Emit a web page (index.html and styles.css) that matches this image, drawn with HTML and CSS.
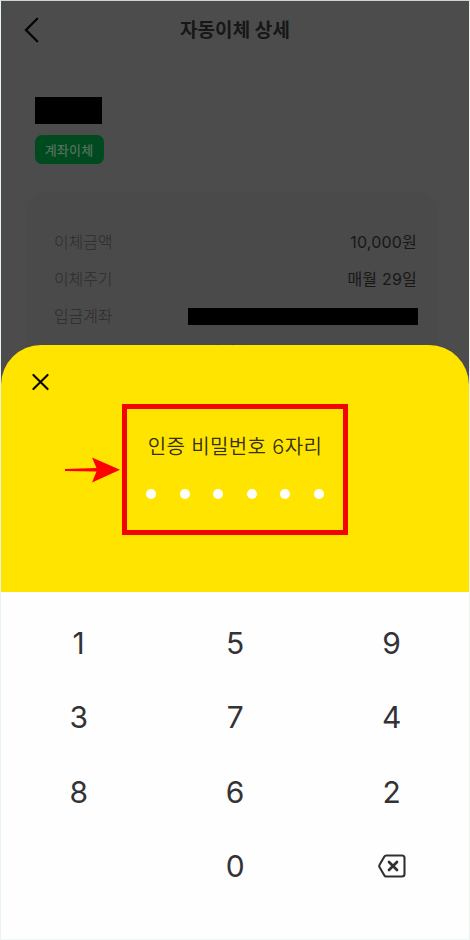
FILE: index.html
```html
<!DOCTYPE html>
<html lang="ko">
<head>
<meta charset="utf-8">
<title>자동이체 상세</title>
<link rel="stylesheet" href="styles.css">
</head>
<body>
<div class="screen">
  <main class="detail">
    <header class="topbar">
      <svg class="back" viewBox="0 0 16 26" fill="none"><path d="M13.2 1.8 2 13l11.2 11.2" stroke="#050505" stroke-width="2.3" stroke-linecap="round"/></svg>
      <h1 class="title">자동이체 상세</h1>
    </header>
    <div class="name-mask"></div>
    <span class="badge">계좌이체</span>
    <section class="card">
      <div class="row"><span class="label">이체금액</span><span class="value">10,000원</span></div>
      <div class="row"><span class="label">이체주기</span><span class="value">매월 29일</span></div>
      <div class="row"><span class="label">입금계좌</span><span class="account-mask"></span></div>
      <div class="row owner">서배인</div>
    </section>
  </main>
  <section class="sheet">
    <div class="prompt">
      <svg class="close" viewBox="0 0 18 18" fill="none"><path d="M1.5 1.5l15 15M16.5 1.5l-15 15" stroke="#080800" stroke-width="2.2" stroke-linecap="round"/></svg>
      <div class="focus">
        <p class="caption">인증 비밀번호 6자리</p>
        <div class="dots"><i></i><i></i><i></i><i></i><i></i><i></i></div>
      </div>
      <svg class="arrow" viewBox="0 0 56 26"><path d="M0 12.1 31.5 11 27 .5 55 12.8 27 25.5 31.5 14.5 0 14z" fill="#f00"/></svg>
    </div>
    <div class="keypad">
      <span>1</span><span>5</span><span>9</span>
      <span>3</span><span>7</span><span>4</span>
      <span>8</span><span>6</span><span>2</span>
      <span></span><span>0</span>
      <span><svg class="delete" viewBox="0 0 28 24" fill="none" stroke="#303032" stroke-linejoin="round" stroke-linecap="round"><path d="M8.2 1.5H24a2.5 2.5 0 0 1 2.5 2.5v16a2.5 2.5 0 0 1-2.5 2.5H8.2a2 2 0 0 1-1.8-1L1.6 13.2a2.2 2.2 0 0 1 0-2.4L6.4 2.5a2 2 0 0 1 1.8-1z" stroke-width="2.1"/><path d="m11 8 8 8M19 8l-8 8" stroke-width="2.7"/></svg></span>
    </div>
  </section>
</div>
</body>
</html>
```
FILE: styles.css
```css
* { box-sizing: border-box; }
body { margin: 0; background: #fff; font-family: Inter, "Noto Sans CJK KR", sans-serif; }
.screen {
  display: flex; flex-direction: column;
  width: 470px; height: 940px; overflow: hidden;
  border: 1px solid #dce7e3; border-color: #ccd6d1 #eaf4ef #eefaf6;
  background: #fefefe;
}
.detail { height: 387px; flex: none; background: #4c4c4c; overflow: hidden; }
.topbar { position: relative; height: 95px; padding-top: 15px; }
.back { position: absolute; left: 23px; top: 16px; width: 16px; height: 26px; }
.title { margin: 0; text-align: center; font-size: 19px; line-height: 30px; font-weight: 700; color: #171717; letter-spacing: .1px; }
.name-mask { width: 67px; height: 27px; margin-left: 34px; margin-top: 1px; background: #000; }
.badge {
  display: flex; align-items: center; justify-content: center;
  width: 69px; height: 29px; margin: 11px 0 0 34px;
  border-radius: 7px; background: #004a20; color: #52705c;
  font-size: 13px; font-weight: 500; letter-spacing: .2px; padding: 0 1px 1px 0;
}
.card { margin: 28px 31px 0 24px; padding: 30px 20px 0 29px; height: 200px; border-radius: 22px; background: #4a4a4a; }
.row { display: flex; justify-content: space-between; align-items: center; height: 37.3px; font-size: 16px; }
.label { color: #2c2c2c; font-weight: 300; letter-spacing: -.1px; }
.value { padding-right: 1px; color: #171717; font-weight: 400; letter-spacing: .2px; }
.account-mask { width: 230px; height: 17px; background: #000; margin-top: 2px; }
.owner { color: #1a1a1a; padding-left: 152px; height: 35px; font-weight: 300; letter-spacing: -.4px; }
.sheet { position: relative; margin-top: -43px; display: flex; flex-direction: column; flex: 1; }
.prompt { position: relative; height: 247px; flex: none; padding-top: 59px; border-radius: 40px 40px 0 0; background: #ffe400; }
.close { position: absolute; left: 31px; top: 28px; width: 17px; height: 18px; }
.focus { width: 226px; height: 131px; margin-left: 121px; border: 5px solid #f20500; padding-top: 23px; }
.caption { margin: 0; text-align: center; font-size: 20px; line-height: 30px; font-weight: 350; color: #343011; letter-spacing: .35px; white-space: nowrap; }
.dots { display: flex; justify-content: space-between; width: 178px; margin: 27px 0 0 19px; }
.dots i { width: 10px; height: 10px; border-radius: 50%; background: #fff; }
.arrow { position: absolute; left: 64px; top: 112px; width: 56px; height: 26px; }
.keypad { display: grid; grid-template-columns: repeat(3, 156.5px); grid-auto-rows: 74.5px; padding-top: 13.5px; margin-left: -.6px; }
.keypad span { display: flex; align-items: center; justify-content: center; color: #333335; font-size: 30px; font-weight: 380; }
.delete { width: 28px; height: 24px; }
```
